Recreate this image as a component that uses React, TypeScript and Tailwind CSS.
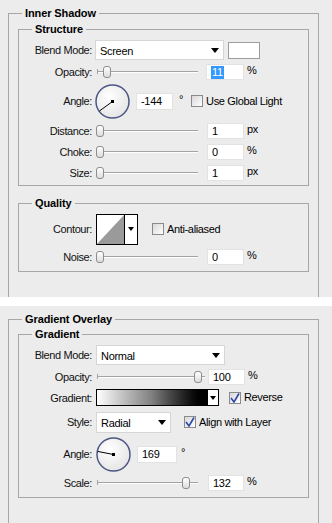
import React from "react";

const font = { fontFamily: '"Liberation Sans", Arial, sans-serif' };

function Group({
  title,
  className,
  children,
}: {
  title: string;
  className: string;
  children?: React.ReactNode;
}) {
  return (
    <fieldset className={"border border-[#a7a7a7] " + className}>
      <legend className="ml-[13px] px-[3px] text-[11px] leading-[12px] font-bold tracking-[-0.1px] text-black">
        {title}
      </legend>
      {children}
    </fieldset>
  );
}

function Label({ text }: { text: string }) {
  return (
    <div className="w-[73px] shrink-0 text-right text-[11px] leading-[12px] tracking-[-0.4px] text-[#111]">
      {text}
    </div>
  );
}

function Arrow() {
  return (
    <svg width="8" height="5" viewBox="0 0 8 5">
      <polygon points="0,0 8,0 4,5" fill="#000" />
    </svg>
  );
}

function Select({ value, w, h, ml }: { value: string; w: string; h: string; ml: string }) {
  return (
    <div
      className={`${w} ${h} ${ml} flex items-center justify-between bg-white border border-[#d6d6d6] pl-[4px] pr-[4px] text-[11px] tracking-[-0.3px] text-black`}
    >
      <span className="mt-[2px]">{value}</span>
      <Arrow />
    </div>
  );
}

function Slider({ w, ml, thumb }: { w: string; ml: string; thumb: number }) {
  return (
    <div className={`${w} ${ml} relative h-[12px] flex items-center`}>
      <div className="w-full h-[2px] border-t border-[#a3a3a3] bg-white" />
      <div className="absolute top-0 left-0 w-[2px] h-[5px] mt-[3px] border-l border-[#a3a3a3]" />
      <div
        className="absolute top-0 w-[8px] h-[12px] rounded-[3px] border border-[#8d8d8d] bg-gradient-to-b from-white to-[#dcdcdc]"
        style={{ left: thumb }}
      />
    </div>
  );
}

function Input({
  value,
  w,
  h,
  ml,
  selected,
}: {
  value: string;
  w: string;
  h: string;
  ml: string;
  selected?: boolean;
}) {
  return (
    <div
      className={`${w} ${h} ${ml} flex items-center bg-white border border-[#e2e2e2] pl-[4px] text-[11px] tracking-[-0.3px] text-black`}
    >
      {selected ? (
        <span className="bg-[#3399ff] text-white leading-[13px] px-[1px]">{value}</span>
      ) : (
        <span className="mt-[1px]">{value}</span>
      )}
    </div>
  );
}

function Unit({ text, ml }: { text: string; ml: string }) {
  return <span className={`${ml} text-[11px] tracking-[-0.3px] text-black mb-[3px]`}>{text}</span>;
}

function CheckBox({ checked, ml }: { checked?: boolean; ml: string }) {
  return (
    <div
      className={`${ml} w-[12px] h-[12px] shrink-0 border border-[#8a8a8a] bg-gradient-to-br from-[#d8d8d8] to-white flex items-center justify-center`}
    >
      {checked && (
        <svg width="10" height="10" viewBox="0 0 10 10">
          <path d="M1 5 L4 9 L9 0.5" stroke="#2d47a8" strokeWidth="1.6" fill="none" />
        </svg>
      )}
    </div>
  );
}

function Dial({ angle, ml }: { angle: number; ml: string }) {
  const r = 16;
  const c = 17.5;
  const a = (angle * Math.PI) / 180;
  const x = c + r * Math.cos(a);
  const y = c - r * Math.sin(a);
  return (
    <svg width="35" height="35" viewBox="0 0 35 35" className={ml}>
      <defs>
        <radialGradient id={"g" + angle} cx="40%" cy="35%" r="70%">
          <stop offset="0%" stopColor="#ffffff" />
          <stop offset="100%" stopColor="#e4e4e4" />
        </radialGradient>
      </defs>
      <circle cx={c} cy={c} r="16.5" fill={`url(#g${angle})`} stroke="#4c5884" strokeWidth="1.5" />
      <line x1={c} y1={c} x2={x} y2={y} stroke="#000" strokeWidth="1" />
      <rect x={c - 1.5} y={c - 1.5} width="3" height="3" fill="#000" />
    </svg>
  );
}

function Row({ h, children }: { h: string; children: React.ReactNode }) {
  return <div className={`${h} flex items-center`}>{children}</div>;
}

export default function App() {
  return (
    <div className="w-[332px] h-[523px] bg-white flex flex-col overflow-hidden" style={font}>
      {/* Panel 1 */}
      <div className="h-[297px] bg-[#ececec] pt-[7px] overflow-hidden shrink-0">
        <Group title="Inner Shadow" className="ml-[8px] w-[311px] h-[290px] border-b-0">
          <Group title="Structure" className="ml-[9px] mt-[4px] w-[291px]">
            <div className="pt-[3px] pb-[2px]">
              <Row h="h-[24px]">
                <Label text="Blend Mode:" />
                <Select value="Screen" w="w-[129px]" h="h-[20px]" ml="ml-[3px]" />
                <div className="ml-[4px] w-[32px] h-[17px] bg-white border border-[#9c9c9c]" />
              </Row>
              <Row h="h-[20px]">
                <Label text="Opacity:" />
                <Slider w="w-[101px]" ml="ml-[5px]" thumb={6} />
                <Input value="11" w="w-[38px]" h="h-[16px]" ml="ml-[8px]" selected />
                <Unit text="%" ml="ml-[3px]" />
              </Row>
              <Row h="h-[38px]">
                <Label text="Angle:" />
                <Dial angle={-144} ml="ml-[3px]" />
                <Input value="-144" w="w-[37px]" h="h-[17px]" ml="ml-[6px]" />
                <Unit text="°" ml="ml-[6px]" />
                <CheckBox ml="ml-[8px]" />
                <span className="ml-[3px] text-[11px] tracking-[-0.35px] text-black">Use Global Light</span>
              </Row>
              <Row h="h-[21px]">
                <Label text="Distance:" />
                <Slider w="w-[101px]" ml="ml-[5px]" thumb={-1} />
                <Input value="1" w="w-[37px]" h="h-[16px]" ml="ml-[9px]" />
                <Unit text="px" ml="ml-[3px]" />
              </Row>
              <Row h="h-[21px]">
                <Label text="Choke:" />
                <Slider w="w-[101px]" ml="ml-[5px]" thumb={-1} />
                <Input value="0" w="w-[37px]" h="h-[16px]" ml="ml-[9px]" />
                <Unit text="%" ml="ml-[3px]" />
              </Row>
              <Row h="h-[21px]">
                <Label text="Size:" />
                <Slider w="w-[101px]" ml="ml-[5px]" thumb={-1} />
                <Input value="1" w="w-[37px]" h="h-[16px]" ml="ml-[9px]" />
                <Unit text="px" ml="ml-[3px]" />
              </Row>
            </div>
          </Group>
          <Group title="Quality" className="ml-[9px] mt-[11px] w-[291px]">
            <div className="pt-[2px] pb-[4px]">
              <Row h="h-[36px]">
                <Label text="Contour:" />
                <div className="ml-[4px] w-[42px] h-[31px] border border-black bg-white flex">
                  <svg width="27" height="29" viewBox="0 0 27 29" className="shrink-0">
                    <rect width="27" height="29" fill="#fff" />
                    <polygon points="0,29 27,0 27,29" fill="#9a9a9a" />
                  </svg>
                  <div className="flex-1 border-l border-black flex items-center justify-center">
                    <svg width="6" height="4" viewBox="0 0 6 4">
                      <polygon points="0,0 6,0 3,4" fill="#000" />
                    </svg>
                  </div>
                </div>
                <CheckBox ml="ml-[14px]" />
                <span className="ml-[3px] text-[11px] tracking-[-0.35px] text-black">Anti-aliased</span>
              </Row>
              <Row h="h-[20px]">
                <Label text="Noise:" />
                <Slider w="w-[101px]" ml="ml-[5px]" thumb={-1} />
                <Input value="0" w="w-[37px]" h="h-[16px]" ml="ml-[9px]" />
                <Unit text="%" ml="ml-[3px]" />
              </Row>
            </div>
          </Group>
        </Group>
      </div>

      <div className="h-[9px] bg-white shrink-0" />

      {/* Panel 2 */}
      <div className="flex-1 bg-[#ececec] pt-[7px] overflow-hidden">
        <Group title="Gradient Overlay" className="ml-[8px] w-[311px] h-[230px] border-b-0">
          <Group title="Gradient" className="ml-[9px] mt-[3px] w-[291px]">
            <div className="pt-[3px] pb-[3px]">
              <Row h="h-[24px]">
                <Label text="Blend Mode:" />
                <Select value="Normal" w="w-[129px]" h="h-[20px]" ml="ml-[4px]" />
              </Row>
              <Row h="h-[20px]">
                <Label text="Opacity:" />
                <Slider w="w-[108px]" ml="ml-[5px]" thumb={97} />
                <Input value="100" w="w-[37px]" h="h-[16px]" ml="ml-[3px]" />
                <Unit text="%" ml="ml-[3px]" />
              </Row>
              <Row h="h-[21px]">
                <Label text="Gradient:" />
                <div className="ml-[4px] h-[17px] flex border border-black bg-white">
                  <div className="w-[111px] h-full bg-gradient-to-r from-white via-[#808080] to-black border-r border-black" />
                  <div className="w-[10px] h-full flex items-center justify-center">
                    <svg width="6" height="4" viewBox="0 0 6 4">
                      <polygon points="0,0 6,0 3,4" fill="#000" />
                    </svg>
                  </div>
                </div>
                <CheckBox checked ml="ml-[10px]" />
                <span className="ml-[3px] text-[11px] tracking-[-0.35px] text-black">Reverse</span>
              </Row>
              <Row h="h-[28px]">
                <Label text="Style:" />
                <Select value="Radial" w="w-[75px]" h="h-[21px]" ml="ml-[4px]" />
                <CheckBox checked ml="ml-[13px]" />
                <span className="ml-[3px] text-[11px] tracking-[-0.35px] text-black">Align with Layer</span>
              </Row>
              <Row h="h-[36px]">
                <Label text="Angle:" />
                <Dial angle={169} ml="ml-[4px]" />
                <Input value="169" w="w-[40px]" h="h-[17px]" ml="ml-[6px]" />
                <Unit text="°" ml="ml-[4px]" />
              </Row>
              <Row h="h-[22px]">
                <Label text="Scale:" />
                <Slider w="w-[101px]" ml="ml-[5px]" thumb={85} />
                <Input value="132" w="w-[36px]" h="h-[16px]" ml="ml-[10px]" />
                <Unit text="%" ml="ml-[3px]" />
              </Row>
            </div>
          </Group>
        </Group>
      </div>
    </div>
  );
}
